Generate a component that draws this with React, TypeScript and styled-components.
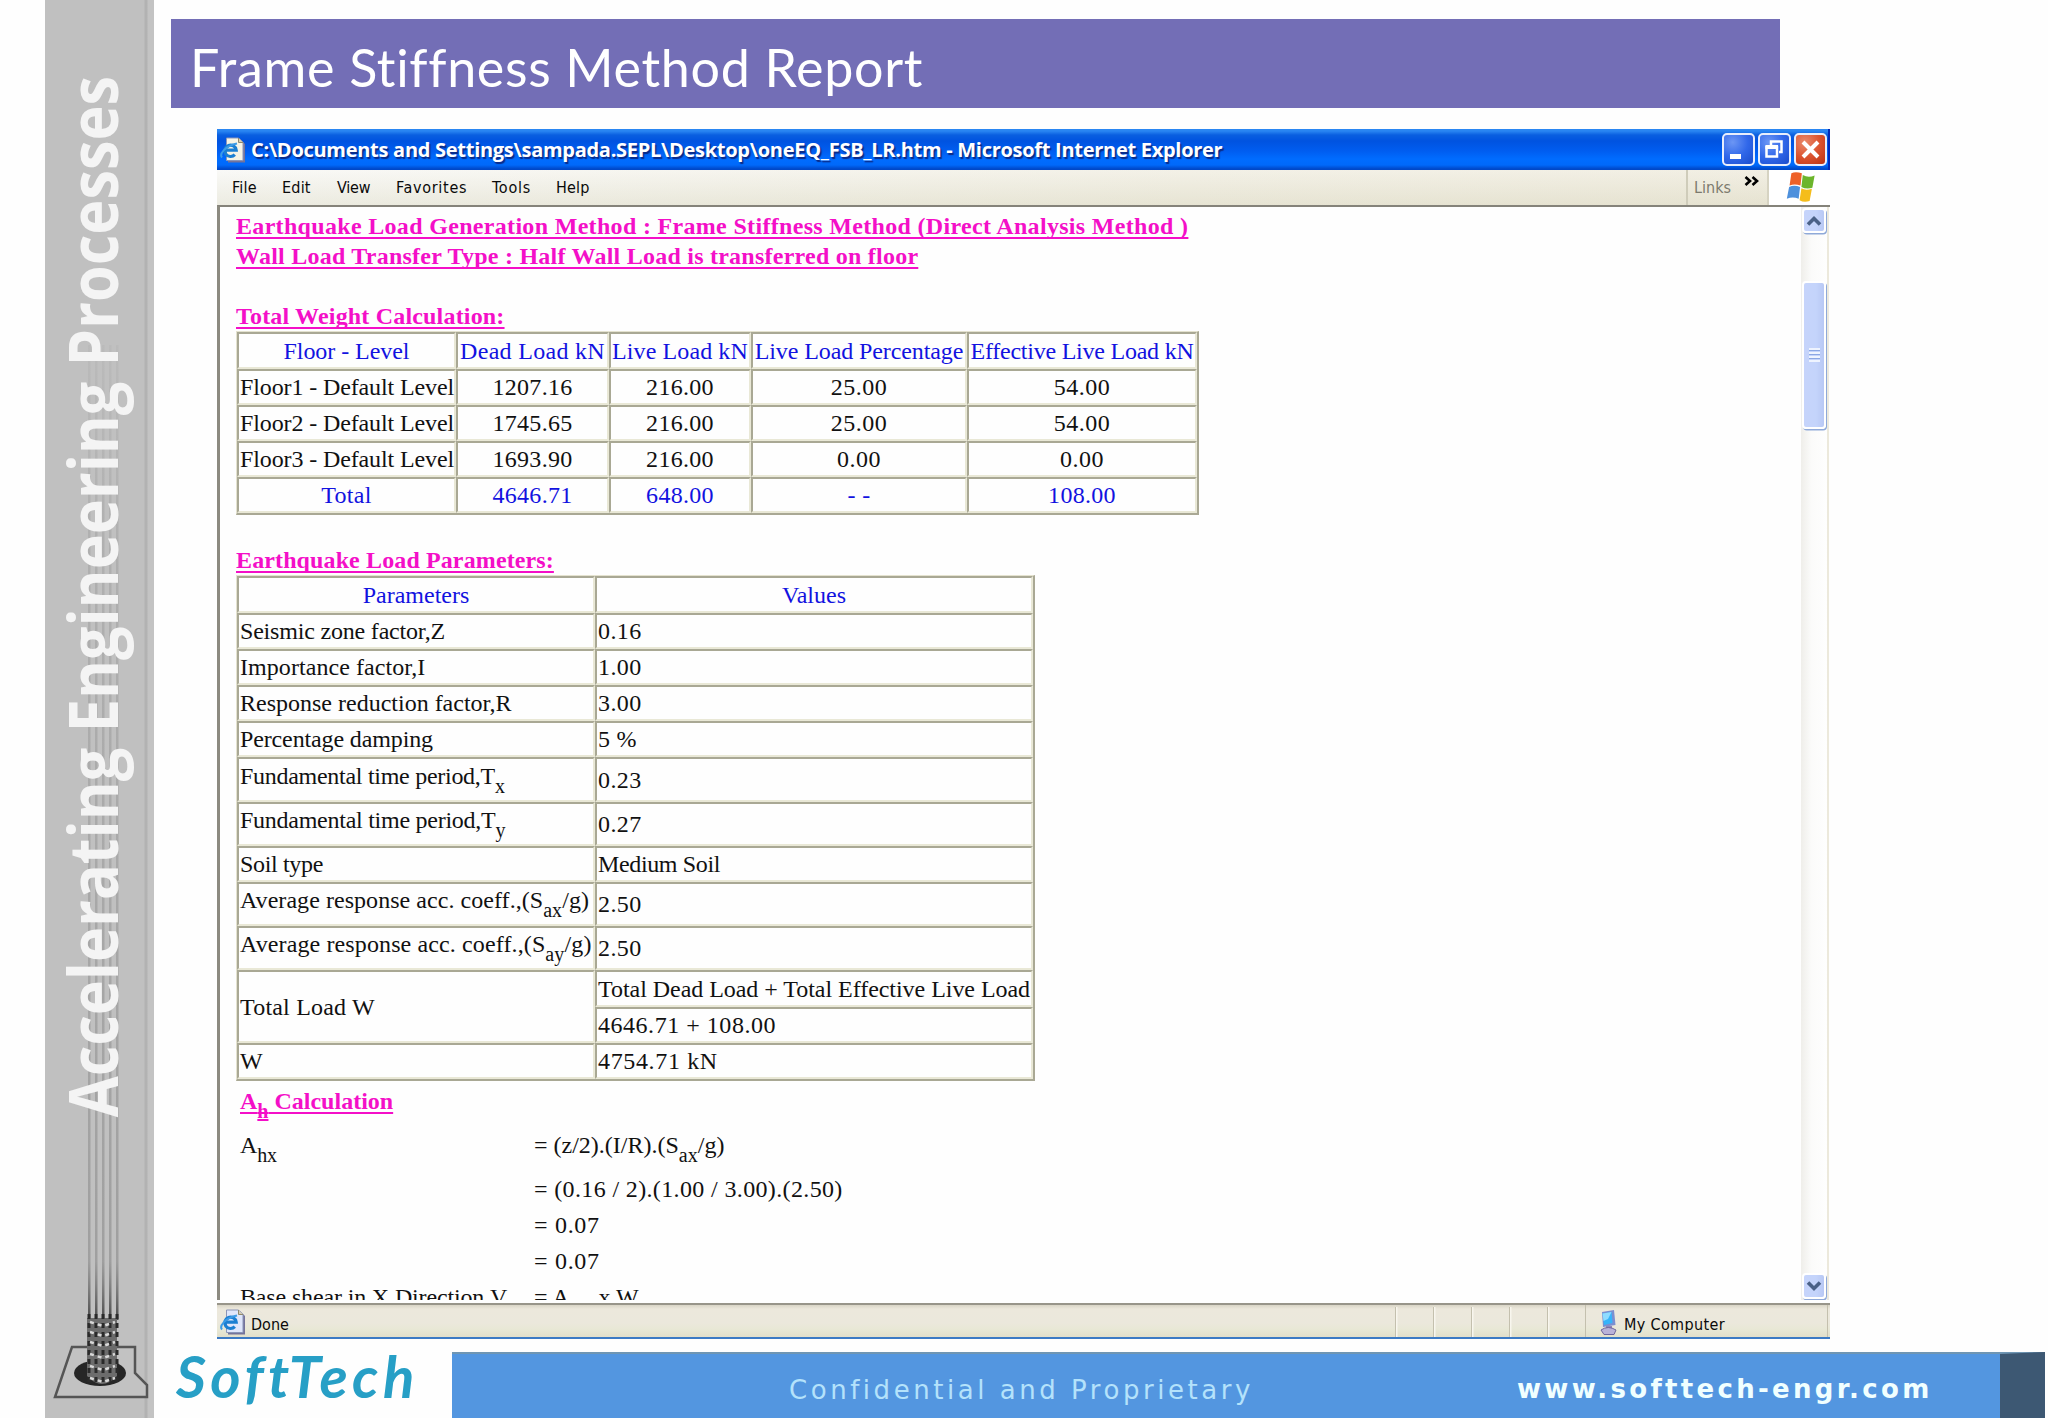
import React from "react";
import styled, { createGlobalStyle, css } from "styled-components";

const SERIF = `"Liberation Serif", "Times New Roman", serif`;
const UI = `"DejaVu Sans Condensed", "DejaVu Sans", Tahoma, sans-serif`;
const MAGENTA = "#f40fc8";

const GlobalStyle = createGlobalStyle`
  * { box-sizing: border-box; }
  body { margin: 0; background: #fefefe; }
`;

const Slide = styled.div`
  display: flex;
  width: 2048px;
  height: 1418px;
  padding-left: 45px;
  overflow: hidden;
`;

/* ---------- left rail ---------- */

const Rail = styled.aside`
  position: relative;
  flex: none;
  width: 109px;
  padding-top: 78px;
  background: linear-gradient(90deg, #c0c0c0 0 99px, #b2b2b2 100px 102px, #c3c3c3 103px);
`;

const RailArt = styled.svg`
  position: absolute;
  left: 0;
  top: 0;
`;

const RailText = styled.div`
  position: relative;
  display: flex;
  justify-content: center;
  width: 93px;
  height: 1037px;
  writing-mode: vertical-rl;
  font: 700 68px/93px "Open Sans", sans-serif;
  white-space: nowrap;
  color: #f4f4f4;
  transform: rotate(180deg) scaleY(0.873);
  transform-origin: 50% 50%;
`;

/* ---------- right side ---------- */

const Main = styled.main`
  display: flex;
  flex-direction: column;
  flex: 1;
`;

const Banner = styled.h1`
  width: 1609px;
  height: 89px;
  margin: 19px 0 0 17px;
  padding: 4px 0 0 19px;
  background: #736eb6;
  color: #fff;
  font: 400 52px/88px Lato, sans-serif;
  letter-spacing: 0.68px;
`;

const Browser = styled.section`
  display: flex;
  flex-direction: column;
  width: 1613px;
  height: 1210px;
  margin: 21px 0 0 63px;
  border-bottom: 3px solid #3c7ac4;
  background: #fefefe;
`;

const TitleBar = styled.header`
  display: flex;
  align-items: center;
  flex: none;
  height: 41px;
  padding: 0 1px 0 3px;
  border-right: 2px solid #0028b8;
  background: linear-gradient(180deg, #2a86f2 0, #2a86f2 2px, #0a5fe0 6px, #0053e0 12px, #005df0 22px, #006cff 30px, #0069fa 36px, #0048c8 40px);
`;

const TitleText = styled.div`
  flex: 1;
  margin-left: 5px;
  color: #fff;
  font: 700 20px/41px "Open Sans", sans-serif;
  letter-spacing: -0.28px;
  text-shadow: 1.5px 1.5px 1px #0a2a86;
  white-space: nowrap;
`;

const CaptionButton = styled.span<{ $close?: boolean }>`
  display: flex;
  align-items: center;
  justify-content: center;
  width: 33px;
  height: 33px;
  margin-left: 3px;
  border: 2px solid #e8eefc;
  border-radius: 5px;
  background: ${(p) =>
    p.$close
      ? "radial-gradient(circle at 30% 25%, #ea8a6c, #dc5430 50%, #b93212)"
      : "radial-gradient(circle at 30% 25%, #6c96f4, #3168ea 50%, #1a4ccc)"};
`;

const MenuBar = styled.nav`
  display: flex;
  flex: none;
  height: 35px;
  background: linear-gradient(180deg, rgba(255, 255, 255, 0.25), rgba(216, 214, 190, 0.35)),
    linear-gradient(90deg, #f7f7f4 0, #efecdf 60%, #ede9da 100%);
  font: 400 16px/35px ${UI};
  color: #0a0a0a;
`;

const Menus = styled.div`
  display: grid;
  grid-template-columns: 50px 55px 59px 96px 64px 60px;
  flex: 1;
  padding-left: 15px;
`;

const MenuItem = styled.span<{ $track?: number }>`
  letter-spacing: ${(p) => p.$track ?? 0.2}px;
`;

const Links = styled.div`
  display: flex;
  width: 83px;
  padding-left: 6px;
  border-left: 2px solid #cfccba;
  border-right: 2px solid #d6d3c2;
  color: #7c7a6e;
  font-size: 16px;
`;

const Chevrons = styled.svg`
  margin: 6px 0 0 13px;
`;

const Throbber = styled.div`
  display: flex;
  width: 61px;
  padding: 1px 0 0 16px;
  background: #fff;
`;

const Viewport = styled.div`
  display: flex;
  flex: none;
  height: 1095px;
  margin-bottom: 3px;
  border-top: 2px solid #85837a;
  border-left: 3px solid #8c8a80;
  overflow: hidden;
`;

const Page = styled.article`
  flex: 1;
  height: 1093px;
  padding: 4px 0 0 16px;
  overflow: hidden;
  font: 400 24px/30px ${SERIF};
  color: #111;
  white-space: nowrap;
`;

const Heading = styled.h2<{ $track?: number; $top?: number; $indent?: number }>`
  height: 30px;
  margin: ${(p) => p.$top ?? 0}px 0 0 ${(p) => p.$indent ?? 0}px;
  font: 700 24px/30px ${SERIF};
  letter-spacing: ${(p) => p.$track ?? 0}px;
  color: ${MAGENTA};
  text-decoration: underline;
  text-decoration-thickness: 1.6px;
  text-underline-offset: 3px;
  text-decoration-skip-ink: none;
`;

const Table = styled.div<{ $cols: string; $rows: string }>`
  display: grid;
  width: max-content;
  grid-template-columns: ${(p) => p.$cols};
  grid-template-rows: ${(p) => p.$rows};
  border: solid;
  border-width: 1px 2px 2px 1px;
  border-color: #e4e2cf #a9a894 #a9a894 #e4e2cf;
`;

const Cell = styled.div<{ $center?: boolean; $blue?: boolean; $lift?: boolean; $span?: number; $track?: number }>`
  display: flex;
  align-items: center;
  justify-content: ${(p) => (p.$center ? "center" : "flex-start")};
  padding: 0 1px ${(p) => (p.$lift ? 8 : 0)}px 1px;
  border: solid;
  border-width: 2px;
  border-color: #a9a894 #e9e8d6 #e9e8d6 #a9a894;
  letter-spacing: ${(p) => p.$track ?? 0}px;
  ${(p) => p.$blue && css`color: #1212e0;`}
  ${(p) => p.$span && css`grid-row: span ${p.$span};`}
`;

const Sub = styled.sub`
  font-size: 20px;
  line-height: 0;
  vertical-align: -9px;
`;

const HeadSub = styled(Sub)`
  text-decoration: underline;
  text-decoration-thickness: 1.6px;
  text-underline-offset: 1px;
`;

const Working = styled.div`
  display: grid;
  grid-template-columns: 294px max-content;
  grid-template-rows: 44px 36px 36px 36px 36px;
  margin: 11px 0 0 4px;
  line-height: 36px;
`;

const Step = styled.div<{ $track?: number }>`
  grid-column: 2;
  letter-spacing: ${(p) => p.$track ?? 0}px;
`;

const StepName = styled.div`
  grid-column: 1;
  letter-spacing: -0.15px;
`;

const SpacedSub = styled(Sub)`
  margin-right: 3px;
`;

const ScrollBar = styled.div`
  display: flex;
  flex-direction: column;
  align-items: center;
  flex: none;
  width: 28px;
  height: 1093px;
  margin-right: 1px;
  padding-top: 1px;
  border-right: 2px solid #ece9dc;
  background: linear-gradient(90deg, #efeeea, #fbfbfa 40%, #fefefe);
`;

const ScrollPart = styled.div<{ $h: number; $top?: number }>`
  display: flex;
  flex: none;
  align-items: center;
  justify-content: center;
  width: 24px;
  height: ${(p) => p.$h}px;
  margin-top: ${(p) => p.$top ?? 0}px;
  border: 2px solid #fff;
  border-radius: 4px;
  box-shadow: 1px 1.5px 0 #8fa9d8;
  background: linear-gradient(90deg, #c6d4fb, #c4d4fb 60%, #b8c8f4);
`;

const Grip = styled.div`
  width: 11px;
  height: 14px;
  background: repeating-linear-gradient(180deg, #eef4ff 0 2px, #8ca8e4 2px 3px, #c4d4fb 3px 4px);
`;

const StatusBar = styled.footer`
  display: flex;
  flex: 1;
  border-top: 2px solid #98958a;
  background: linear-gradient(180deg, #d9d5c6 0, #ece8dc 4px, #ebe8dc 18px, #e8e8d6 24px, #e2dfca 100%);
  font: 400 16px/32px ${UI};
  color: #0a0a0a;
  padding: 0 2px 0 3px;
`;

const StatusMain = styled.div`
  display: flex;
  flex: 1;
  gap: 5px;
  padding-top: 4px;
`;

const StatusText = styled.span<{ $track?: number }>`
  height: 28px;
  line-height: 32px;
  letter-spacing: ${(p) => p.$track ?? 0}px;
`;

const StatusPane = styled.div`
  width: 38px;
  margin-top: 2px;
  border-left: 1.5px solid #c4c0ae;
  box-shadow: inset 1.5px 0 0 #f8f6ee;
`;

const Zone = styled.div`
  display: flex;
  gap: 7px;
  width: 243px;
  padding: 4px 0 0 13px;
  border-left: 1.5px solid #c4c0ae;
  border-right: 1.5px solid #c4c0ae;
`;

const Strip = styled.div`
  display: flex;
  flex: 1;
  padding-left: 22px;
`;

const Logo = styled.div`
  width: 276px;
  height: 78px;
  font: italic 700 58px/74px Lato, sans-serif;
  letter-spacing: 4.5px;
  color: #279fc6;
`;

const StripBar = styled.div`
  display: flex;
  align-items: center;
  width: 1593px;
  height: 66px;
  margin-top: 13px;
  border-top: 2px solid #6f96b4;
  border-right: 45px solid #3d5873;
  padding-left: 337px;
  background: #5396e0;
  white-space: nowrap;
`;

const Notice = styled.span`
  width: 728px;
  padding-top: 7px;
  color: #b4e2fb;
  font: 400 26px/58px "DejaVu Sans", Verdana, sans-serif;
  letter-spacing: 3.54px;
`;

const Site = styled.span`
  padding-top: 5px;
  color: #f0ffff;
  font: 700 26px/60px "DejaVu Sans", Verdana, sans-serif;
  letter-spacing: 3.3px;
`;

/* ---------- drawings ---------- */

const RailDrawing = () => {
  const strands = [43, 50, 57, 64, 71];
  return (
    <RailArt width="109" height="1418" viewBox="0 0 109 1418">
      <defs>
        <linearGradient id="strand" x1="0" y1="0" x2="0" y2="1">
          <stop offset="0" stopColor="#8a8a8a" stopOpacity="0.1" />
          <stop offset="0.2" stopColor="#8a8a8a" stopOpacity="0.3" />
          <stop offset="0.94" stopColor="#858585" stopOpacity="0.55" />
          <stop offset="1" stopColor="#4a4a4a" />
        </linearGradient>
      </defs>
      {strands.map((x) => (
        <rect key={x} x={x} y="345" width="2.5" height="975" fill="url(#strand)" />
      ))}
      <path d="M27 1347H90V1373L102 1385V1397H10Z" fill="#c2c2c2" stroke="#555" strokeWidth="2.5" />
      <ellipse cx="55" cy="1373" rx="26" ry="13" fill="#262626" />
      <path d="M42 1318H72V1376Q57 1392 42 1376Z" fill="#6c6c6c" />
      {strands.map((x) => (
        <path key={x} d={`M${x + 1} 1314V1382`} stroke="#2a2a2a" strokeWidth="3" strokeDasharray="5 4" />
      ))}
      {[1322, 1332, 1342, 1354, 1366, 1378].map((y) => (
        <path key={y} d={`M45 ${y}L58 ${y + 4}L70 ${y}`} fill="none" stroke="#d8d8d8" strokeWidth="2.5" strokeDasharray="4 4" />
      ))}
    </RailArt>
  );
};

const DocIcon = ({ paper }: { paper: string }) => (
  <svg width="26" height="26" viewBox="0 0 26 26">
    <path d="M8 2H20L25 7V25.500H8Z" fill="#75739a" />
    <path d="M6.500 1H18.500L23 5.500V23.500H6.500Z" fill={paper} stroke="#8a95b8" strokeWidth="1" />
    <path d="M18.500 1V5.500H23" fill="#d4cdb4" stroke="#8f886c" strokeWidth="1" />
    <path d="M4.800 13.200H16.200A5.700 5.700 0 1 0 14.800 17.600" fill="none" stroke="#1b7fd2" strokeWidth="3.200" />
    <path d="M2 20.500C-1 17 5 9 17 6.500" fill="none" stroke="#3b9be6" strokeWidth="2" />
  </svg>
);

const ComputerIcon = () => (
  <svg width="18" height="28" viewBox="0 0 18 28">
    <path d="M3 3L15 1L16.500 16L4 18Z" fill="#7b8fd0" />
    <path d="M3.500 4.500L12.500 3L13.500 14L5 16Z" fill="#35b4fa" />
    <path d="M3.500 4.500L12.500 3L9 10L4.500 12Z" fill="#8fdcff" />
    <path d="M7 17H13V20H7Z" fill="#8f86b8" />
    <path d="M2 21Q9 16 17 21L15 25.500H5Z" fill="#b9b2d8" stroke="#6f669c" strokeWidth="1" />
  </svg>
);

const FlagIcon = () => (
  <svg width="31" height="31" viewBox="0 0 33 34">
    <path d="M6.500 2.500Q11 0 18 2.500L16.500 16Q10 13.500 4.500 16Z" fill="#ee6128" />
    <path d="M19 4.500Q25 8 32 5L29.500 18.500Q23 20.500 17.500 17.500Z" fill="#6cb52c" />
    <path d="M4 17.500Q9.500 15 16 17.500L14.500 30.500Q8 27.500 1.500 30.500Z" fill="#4d90dc" />
    <path d="M17.500 19Q22 22 29 19.500L26.500 33Q20 35 15.500 32Z" fill="#f5bd1b" />
  </svg>
);

const Arrow = ({ down }: { down?: boolean }) => (
  <svg width="16" height="12" viewBox="0 0 16 12">
    <path d={down ? "M2 2.500L8 8.500L14 2.500" : "M2 9.500L8 3.500L14 9.500"} fill="none" stroke="#4a6187" strokeWidth="3.600" />
  </svg>
);

/* ---------- content ---------- */

const floorHead: [string, number][] = [
  ["Floor - Level", -0.05],
  ["Dead Load kN", 0.3],
  ["Live Load kN", 0.1],
  ["Live Load Percentage", -0.1],
  ["Effective Live Load kN", -0.23],
];

const floors = [
  ["Floor1 - Default Level", "1207.16", "216.00", "25.00", "54.00"],
  ["Floor2 - Default Level", "1745.65", "216.00", "25.00", "54.00"],
  ["Floor3 - Default Level", "1693.90", "216.00", "0.00", "0.00"],
];

const totals = ["Total", "4646.71", "648.00", "- -", "108.00"];

type Param = { name: React.ReactNode; value: string; track?: number; valueTrack?: number; lift?: boolean };

const params: Param[] = [
  { name: "Seismic zone factor,Z", value: "0.16", track: -0.19 },
  { name: "Importance factor,I", value: "1.00", track: 0.06 },
  { name: "Response reduction factor,R", value: "3.00" },
  { name: "Percentage damping", value: "5 %", track: -0.13, valueTrack: 0.2 },
  { name: <span>Fundamental time period,T<Sub>x</Sub></span>, value: "0.23", track: -0.28, lift: true },
  { name: <span>Fundamental time period,T<Sub>y</Sub></span>, value: "0.27", track: -0.26, lift: true },
  { name: "Soil type", value: "Medium Soil", track: -0.33, valueTrack: -0.36 },
  { name: <span>Average response acc. coeff.,(S<Sub>ax</Sub>/g)</span>, value: "2.50", track: 0.05, lift: true },
  { name: <span>Average response acc. coeff.,(S<Sub>ay</Sub>/g)</span>, value: "2.50", track: 0.12, lift: true },
];

export default function App() {
  return (
    <Slide>
      <GlobalStyle />
      <Rail>
        <RailDrawing />
        <RailText>Accelerating Engineering Processes</RailText>
      </Rail>
      <Main>
        <Banner>Frame Stiffness Method Report</Banner>
        <Browser>
          <TitleBar>
            <DocIcon paper="#f6f4e6" />
            <TitleText>
              C:\Documents and Settings\sampada.SEPL\Desktop\oneEQ_FSB_LR.htm - Microsoft Internet Explorer
            </TitleText>
            <CaptionButton>
              <svg width="29" height="29" viewBox="0 0 29 29"><rect x="6" y="19" width="11" height="5" fill="#fff" /></svg>
            </CaptionButton>
            <CaptionButton>
              <svg width="29" height="29" viewBox="0 0 29 29">
                <path d="M11 10V6.500H21.500V17H19" fill="none" stroke="#fff" strokeWidth="2.500" />
                <rect x="6.500" y="12" width="10.500" height="9.500" fill="none" stroke="#fff" strokeWidth="2.500" />
                <path d="M5.500 12H18" stroke="#fff" strokeWidth="4" />
              </svg>
            </CaptionButton>
            <CaptionButton $close>
              <svg width="29" height="29" viewBox="0 0 29 29"><path d="M7 7L22 22M22 7L7 22" stroke="#fff" strokeWidth="4" /></svg>
            </CaptionButton>
          </TitleBar>
          <MenuBar>
            <Menus>
              <MenuItem>File</MenuItem>
              <MenuItem>Edit</MenuItem>
              <MenuItem $track={-0.2}>View</MenuItem>
              <MenuItem $track={0.7}>Favorites</MenuItem>
              <MenuItem $track={0.75}>Tools</MenuItem>
              <MenuItem>Help</MenuItem>
            </Menus>
            <Links>
              Links
              <Chevrons width="15" height="10" viewBox="0 0 15 10">
                <path d="M1.500 1L6 5L1.500 9M8.500 1L13 5L8.500 9" fill="none" stroke="#000" strokeWidth="2.600" />
              </Chevrons>
            </Links>
            <Throbber>
              <FlagIcon />
            </Throbber>
          </MenuBar>
          <Viewport>
            <Page>
              <Heading $track={0.32}>Earthquake Load Generation Method : Frame Stiffness Method (Direct Analysis Method )</Heading>
              <Heading $track={0.24}>Wall Load Transfer Type : Half Wall Load is transferred on floor</Heading>
              <Heading $track={0.18} $top={30}>Total Weight Calculation:</Heading>
              <Table $cols="219px 153px 142px 216px 230px" $rows="37px repeat(4, 36px)">
                {floorHead.map(([label, track]) => (
                  <Cell key={label} $center $blue $track={track}>{label}</Cell>
                ))}
                {floors.map((row) =>
                  row.map((v, i) => (
                    <Cell key={row[0] + i} $center={i > 0} $track={i === 0 ? -0.12 : i < 3 ? 0.3 : 0.5}>{v}</Cell>
                  ))
                )}
                {totals.map((v) => (
                  <Cell key={v} $center $blue $track={0.3}>{v}</Cell>
                ))}
              </Table>
              <Heading $track={0.12} $top={30}>Earthquake Load Parameters:</Heading>
              <Table $cols="358px 438px" $rows="37px 36px 36px 36px 36px 45px 44px 36px 44px 44px 37px 36px 36px">
                <Cell $center $blue>Parameters</Cell>
                <Cell $center $blue>Values</Cell>
                {params.map((p, i) => (
                  <React.Fragment key={i}>
                    <Cell $track={p.track} $lift={p.lift}>{p.name}</Cell>
                    <Cell $track={p.valueTrack ?? 0.4}>{p.value}</Cell>
                  </React.Fragment>
                ))}
                <Cell $span={2} $track={0.2}>Total Load W</Cell>
                <Cell $track={-0.04}>Total Dead Load + Total Effective Live Load</Cell>
                <Cell $track={0.53}>4646.71 + 108.00</Cell>
                <Cell>W</Cell>
                <Cell $track={0.65}>4754.71 kN</Cell>
              </Table>
              <Heading $top={5} $indent={4}>A<HeadSub>h</HeadSub> Calculation</Heading>
              <Working>
                <StepName>A<Sub>hx</Sub></StepName>
                <Step>= (z/2).(I/R).(S<Sub>ax</Sub>/g)</Step>
                <Step $track={0.36}>= (0.16 / 2).(1.00 / 3.00).(2.50)</Step>
                <Step $track={0.7}>= 0.07</Step>
                <Step $track={0.7}>= 0.07</Step>
                <StepName>Base shear in X Direction,V<Sub>x</Sub></StepName>
                <Step>= A<SpacedSub>hx</SpacedSub> x W</Step>
              </Working>
            </Page>
            <ScrollBar>
              <ScrollPart $h={25}><Arrow /></ScrollPart>
              <ScrollPart $h={148} $top={48}><Grip /></ScrollPart>
              <ScrollPart $h={26} $top={844}><Arrow down /></ScrollPart>
            </ScrollBar>
          </Viewport>
          <StatusBar>
            <StatusMain>
              <DocIcon paper="#dfe6fb" />
              <StatusText>Done</StatusText>
            </StatusMain>
            <StatusPane />
            <StatusPane />
            <StatusPane />
            <StatusPane />
            <StatusPane />
            <Zone>
              <ComputerIcon />
              <StatusText $track={0.35}>My Computer</StatusText>
            </Zone>
          </StatusBar>
        </Browser>
        <Strip>
          <Logo>SoftTech</Logo>
          <StripBar>
            <Notice>Confidential and Proprietary</Notice>
            <Site>www.softtech-engr.com</Site>
          </StripBar>
        </Strip>
      </Main>
    </Slide>
  );
}
